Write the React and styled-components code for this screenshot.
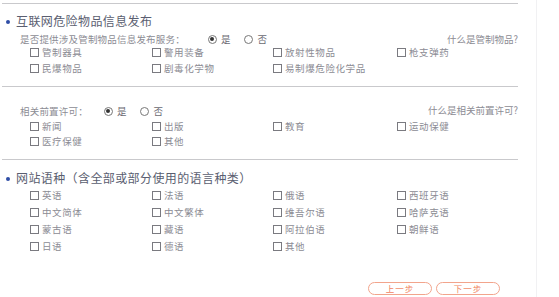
import React from 'react'
import styled, { createGlobalStyle } from 'styled-components'

const GlobalStyle = createGlobalStyle`
  body {
    margin: 0;
    background: #fff;
    font-family: "Noto Sans CJK SC", "Noto Sans", sans-serif;
  }
`

const goods = ['管制器具', '警用装备', '放射性物品', '枪支弹药', '民爆物品', '剧毒化学物', '易制爆危险化学品']
const permits = ['新闻', '出版', '教育', '运动保健', '医疗保健', '其他']
const langs = [
  '英语', '法语', '俄语', '西班牙语',
  '中文简体', '中文繁体', '维吾尔语', '哈萨克语',
  '蒙古语', '藏语', '阿拉伯语', '朝鲜语',
  '日语', '德语', '其他',
]

const Check = ({ label }) => (
  <Option>
    <Box />
    {label}
  </Option>
)

const Radios = ({ offset }) => (
  <RadioGroup $offset={offset}>
    <RadioItem><Dot $on />是</RadioItem>
    <RadioItem><Dot />否</RadioItem>
  </RadioGroup>
)

const App = () => {
  return (
    <Page>
      <GlobalStyle />
      <Main>
        <Section $top={10} $bottom={12}>
          <Title>互联网危险物品信息发布</Title>
          <QuestionRow $mt={5}>
            <Label>是否提供涉及管制物品信息发布服务：</Label>
            <Radios offset={23} />
            <Help>什么是管制物品?</Help>
          </QuestionRow>
          <Options $gap={4} $mt={1}>
            {goods.map((g) => <Check key={g} label={g} />)}
          </Options>
        </Section>

        <Section $top={18} $bottom={12}>
          <QuestionRow>
            <Label>相关前置许可：</Label>
            <Radios offset={16} />
            <Help $up>什么是相关前置许可?</Help>
          </QuestionRow>
          <Options $gap={3} $mt={3}>
            {permits.map((p) => <Check key={p} label={p} />)}
          </Options>
        </Section>

        <Section $top={11} $bottom={0}>
          <Title>网站语种（含全部或部分使用的语言种类）</Title>
          <Options $gap={5} $mt={4}>
            {langs.map((l, i) => <Check key={i} label={l} />)}
          </Options>
          <Actions>
            <StepButton>上一步</StepButton>
            <StepButton>下一步</StepButton>
          </Actions>
        </Section>
      </Main>
    </Page>
  )
}

export default App

const Page = styled.div`
  width: 559px;
  height: 297px;
  display: flex;
  overflow: hidden;
`
const Main = styled.div`
  width: 537px;
  height: 297px;
  border-right: 1px solid #f1f1f3;
  padding: 3px 0 0 2px;
  box-sizing: border-box;
`
const Section = styled.div`
  width: 516px;
  border-top: 1px solid #c9c9cc;
  padding-top: ${(p) => p.$top}px;
  padding-bottom: ${(p) => p.$bottom}px;
`
const Title = styled.div`
  height: 14px;
  line-height: 14px;
  font-size: 12px;
  color: #5a5e70;
  padding-left: 14px;
  position: relative;
  letter-spacing: 0.4px;

  &::before {
    content: "";
    position: absolute;
    left: 4px;
    top: 6px;
    width: 4px;
    height: 4px;
    border-radius: 50%;
    background: #2f4da6;
  }
`
const QuestionRow = styled.div`
  height: 12px;
  display: flex;
  align-items: center;
  margin-top: ${(p) => p.$mt || 0}px;
  padding-left: 18px;
  font-size: 9.5px;
  color: #8c8c94;
`
const Label = styled.span`
  letter-spacing: 0.2px;
`
const RadioGroup = styled.div`
  display: flex;
  gap: 14px;
  margin-left: ${(p) => p.$offset}px;
  color: #6a6a72;
`
const RadioItem = styled.span`
  display: flex;
  align-items: center;
  gap: 4px;
`
const Dot = styled.span`
  width: 7px;
  height: 7px;
  border: 1px solid #777;
  border-radius: 50%;
  box-sizing: content-box;
  display: flex;
  align-items: center;
  justify-content: center;

  &::after {
    content: "";
    display: ${(p) => (p.$on ? 'block' : 'none')};
    width: 4px;
    height: 4px;
    border-radius: 50%;
    background: #333;
  }
`
const Help = styled.span`
  margin-left: auto;
  position: relative;
  top: ${(p) => (p.$up ? -1 : 0)}px;
  color: #8c8c94;
`
const Options = styled.div`
  display: grid;
  grid-template-columns: 122px 121px 124px 1fr;
  grid-auto-rows: 12px;
  row-gap: ${(p) => p.$gap}px;
  margin-top: ${(p) => p.$mt}px;
  padding-left: 28px;
  font-size: 9.5px;
  color: #8c8c94;
`
const Option = styled.label`
  display: flex;
  align-items: center;
  gap: 3px;
  letter-spacing: 0.6px;
`
const Box = styled.span`
  width: 7px;
  height: 7px;
  border: 1px solid #7a7a80;
  background: #fff;
`
const Actions = styled.div`
  display: flex;
  justify-content: flex-end;
  gap: 4px;
  margin-top: 30px;
  padding-right: 18px;
`
const StepButton = styled.button`
  width: 64px;
  height: 13px;
  padding: 0;
  border: 1px solid #f2a48c;
  border-radius: 8px;
  background: #fff;
  color: #f08462;
  font-family: "Noto Sans CJK SC", sans-serif;
  font-size: 8.5px;
  line-height: 11px;
  letter-spacing: 1px;
  display: flex;
  align-items: center;
  justify-content: center;
`
